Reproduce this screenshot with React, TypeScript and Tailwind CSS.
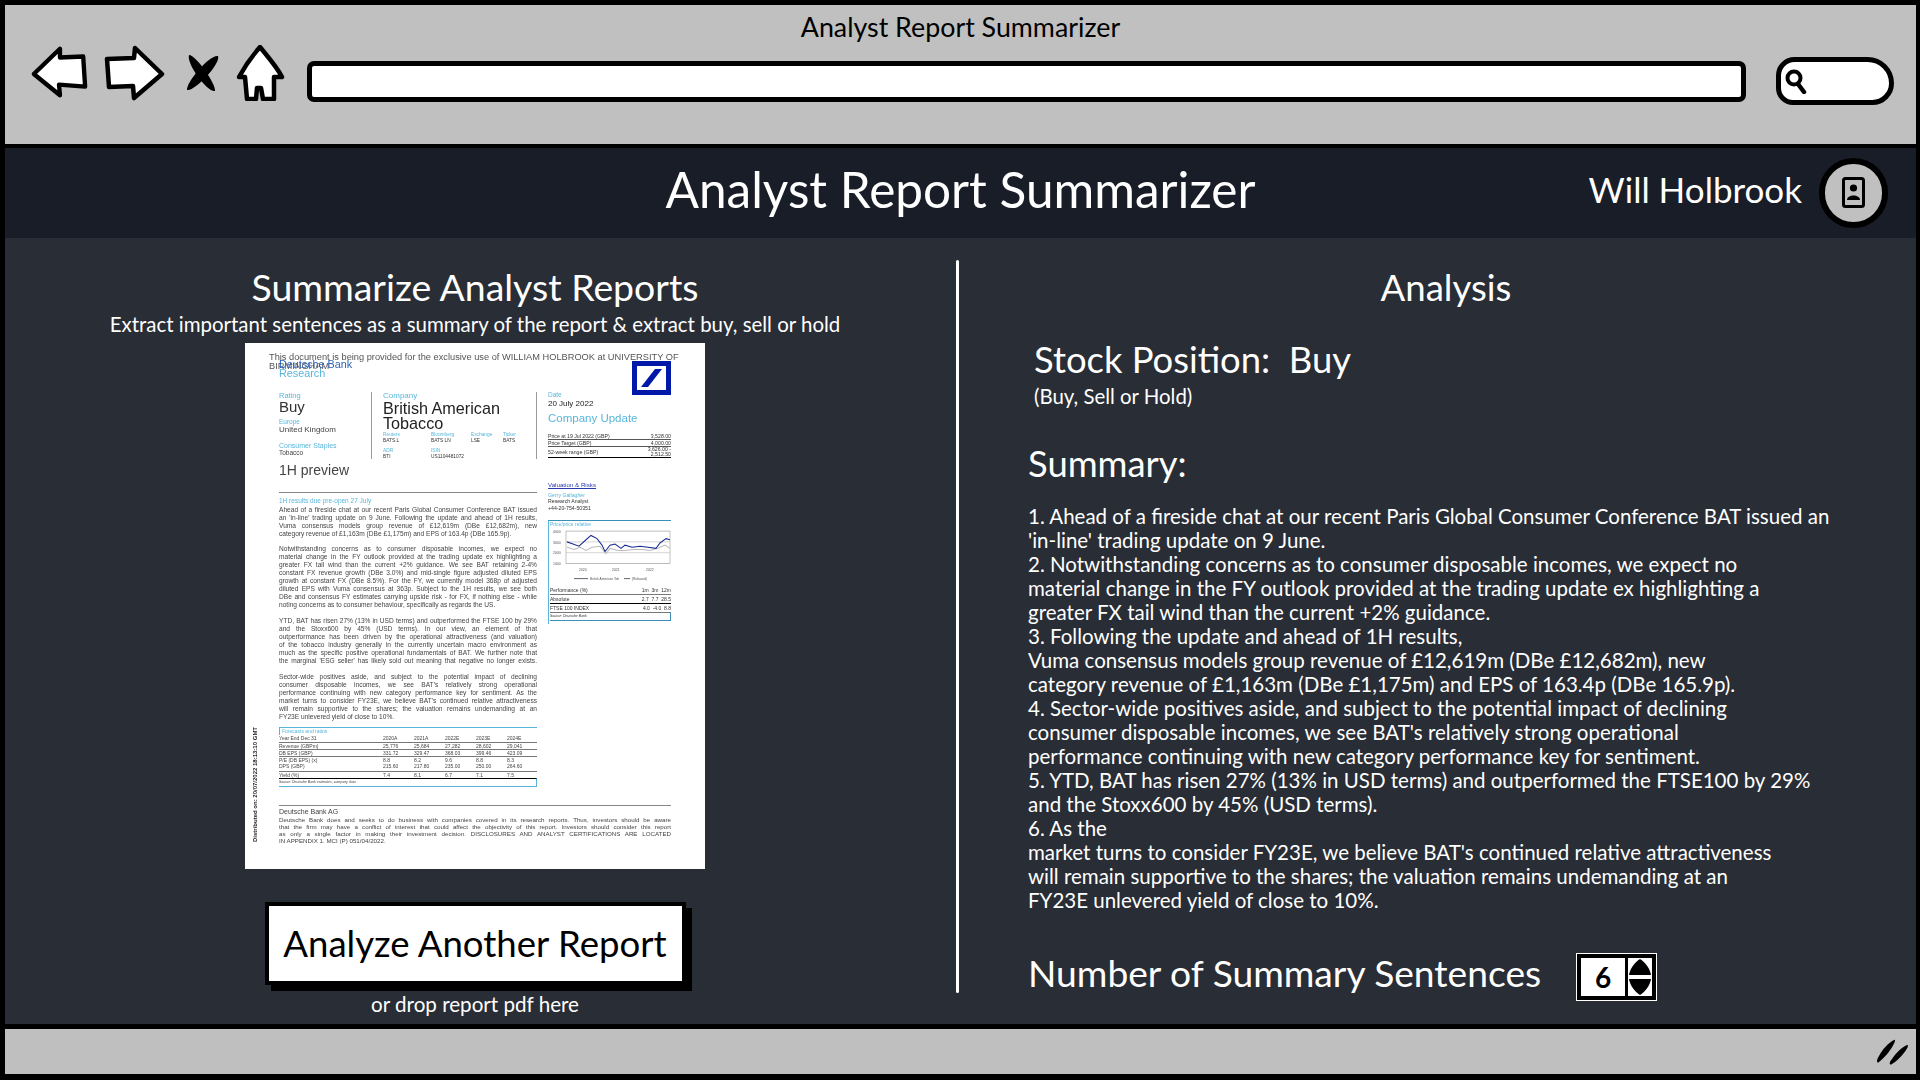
import React from "react";

const ui = "font-['Lato','Open_Sans',sans-serif]";
const doc = "font-['Liberation_Sans',Arial,sans-serif]";

const summary = [
  "1. Ahead of a fireside chat at our recent Paris Global Consumer Conference BAT issued an",
  "'in-line' trading update on 9 June.",
  "2. Notwithstanding concerns as to consumer disposable incomes, we expect no",
  "material change in the FY outlook provided at the trading update ex highlighting a",
  "greater FX tail wind than the current +2% guidance.",
  "3. Following the update and ahead of 1H results,",
  "Vuma consensus models group revenue of £12,619m (DBe £12,682m), new",
  "category revenue of £1,163m (DBe £1,175m) and EPS of 163.4p (DBe 165.9p).",
  "4. Sector-wide positives aside, and subject to the potential impact of declining",
  "consumer disposable incomes, we see BAT's relatively strong operational",
  "performance continuing with new category performance key for sentiment.",
  "5. YTD, BAT has risen 27% (13% in USD terms) and outperformed the FTSE100 by 29%",
  "and the Stoxx600 by 45% (USD terms).",
  "6. As the",
  "market turns to consider FY23E, we believe BAT's continued relative attractiveness",
  "will remain supportive to the shares; the valuation remains undemanding at an",
  "FY23E unlevered yield of close to 10%.",
];

const p1 = [
  "Ahead of a fireside chat at our recent Paris Global Consumer Conference BAT issued",
  "an 'in-line' trading update on 9 June. Following the update and ahead of 1H results,",
  "Vuma consensus models group revenue of £12,619m (DBe £12,682m), new",
];
const p1Last = "category revenue of £1,163m (DBe £1,175m) and EPS of 163.4p (DBe 165.9p).";
const p2 = [
  "Notwithstanding concerns as to consumer disposable incomes, we expect no",
  "material change in the FY outlook provided at the trading update ex highlighting a",
  "greater FX tail wind than the current +2% guidance. We see BAT retaining 2-4%",
  "constant FX revenue growth (DBe 3.0%) and mid-single figure adjusted diluted EPS",
  "growth at constant FX (DBe 8.5%). For the FY, we currently model 368p of adjusted",
  "diluted EPS with Vuma consensus at 363p. Subject to the 1H results, we see both",
  "DBe and consensus FY estimates carrying upside risk - for FX, if nothing else - while",
];
const p2Last = "noting concerns as to consumer behaviour, specifically as regards the US.";
const p3 = [
  "YTD, BAT has risen 27% (13% in USD terms) and outperformed the FTSE 100 by 29%",
  "and the Stoxx600 by 45% (USD terms). In our view, an element of that",
  "outperformance has been driven by the operational attractiveness (and valuation)",
  "of the tobacco industry generally in the currently uncertain macro environment as",
  "much as the specific positive operational fundamentals of BAT. We further note that",
  "the marginal 'ESG seller' has likely sold out meaning that negative no longer exists.",
];
const p4 = [
  "Sector-wide positives aside, and subject to the potential impact of declining",
  "consumer disposable incomes, we see BAT's relatively strong operational",
  "performance continuing with new category performance key for sentiment. As the",
  "market turns to consider FY23E, we believe BAT's continued relative attractiveness",
  "will remain supportive to the shares; the valuation remains undemanding at an",
];

function Para({ lines, last, className = "" }: { lines: string[]; last?: string; className?: string }) {
  return (
    <div className={"text-[6.6px] leading-[8px] text-[#444] " + className}>
      {lines.map((l, i) => (
        <div key={i} className="whitespace-nowrap [text-align-last:justify]">
          {l}
        </div>
      ))}
      {last ? <div className="whitespace-nowrap">{last}</div> : null}
    </div>
  );
}

const forecast = [
  ["Year End Dec 31", "2020A", "2021A", "2022E", "2023E", "2024E"],
  ["Revenue (GBPm)", "25,776", "25,684", "27,282", "28,602", "29,041"],
  ["DB EPS (GBP)", "331.72", "329.47", "368.03", "399.46", "423.09"],
  ["P/E (DB EPS) (x)", "8.8", "8.2", "9.6", "8.8", "8.3"],
  ["DPS (GBP)", "215.60", "217.80", "235.00", "250.00", "264.60"],
  ["Yield (%)", "7.4", "8.1", "6.7", "7.1", "7.5"],
];

function Label({ children, className = "" }: { children: React.ReactNode; className?: string }) {
  return <div className={"text-[#58b6dc] leading-none " + className}>{children}</div>;
}

function DocPage() {
  return (
    <div className={"relative w-[460px] h-[526px] bg-white overflow-hidden blur-[0.4px] text-[#333] pl-[34px] pr-[34px] pt-[10px] shrink-0 " + doc}>
      <div className="-ml-[10px] w-[440px] text-[9.25px] leading-[9px] text-[#555] whitespace-nowrap">
        This document is being provided for the exclusive use of WILLIAM HOLBROOK at UNIVERSITY OF
        <br />
        BIRMINGHAM
      </div>
      <svg className="absolute left-[387px] top-[18px]" width="39" height="34" viewBox="0 0 39 34">
        <rect width="39" height="34" fill="#0018a8" />
        <rect x="5" y="5" width="29" height="24" fill="#fff" />
        <path d="M9 26 L23 8 L30 8 L16 26 Z" fill="#0018a8" />
      </svg>
      <div className="-mt-[11px] text-[10.8px] leading-[8px] text-[#2a62b8]">Deutsche Bank</div>
      <div className="text-[10.8px] leading-[10px] text-[#58b6dc]">Research</div>

      <div className="flex mt-[14px] h-[67px]">
        <div className="w-[93px] border-r border-[#999] shrink-0">
          <Label className="text-[7.5px]">Rating</Label>
          <div className="text-[15px] leading-[15px] -mt-[1px]">Buy</div>
          <Label className="text-[6.5px] mt-[5px]">Europe</Label>
          <div className="text-[8px] leading-[8px] mt-[1px] text-[#444]">United Kingdom</div>
          <Label className="text-[7px] mt-[8px]">Consumer Staples</Label>
          <div className="text-[6.5px] leading-[8px] text-[#444]">Tobacco</div>
        </div>
        <div className="w-[165px] border-r border-[#999] pl-[11px] shrink-0">
          <Label className="text-[8px]">Company</Label>
          <div className="text-[16.2px] leading-[15px] mt-[1px] text-[#222] whitespace-nowrap">British American</div>
          <div className="text-[16.2px] leading-[15px] text-[#222]">Tobacco</div>
          <div className="grid grid-cols-[48px_40px_32px_20px] text-[4.8px] leading-[6px] mt-[2px]">
            <Label>Reuters</Label>
            <Label>Bloomberg</Label>
            <Label>Exchange</Label>
            <Label>Ticker</Label>
            <div>BATS.L</div>
            <div>BATS LN</div>
            <div>LSE</div>
            <div>BATS</div>
          </div>
          <div className="grid grid-cols-[48px_80px] text-[4.8px] leading-[6px] mt-[5px]">
            <Label>ADR</Label>
            <Label>ISIN</Label>
            <div>BTI</div>
            <div>US1104481072</div>
          </div>
        </div>
        <div className="pl-[11px] w-[134px] shrink-0">
          <Label className="text-[6.5px]">Date</Label>
          <div className="text-[8px] leading-[8px] mt-[1px] text-[#222]">20 July 2022</div>
          <Label className="text-[11.5px] mt-[5px] whitespace-nowrap">Company Update</Label>
          <div className="text-[5.2px] leading-[6px] mt-[9px]">
            <div className="flex justify-between border-b border-[#555]"><span>Price at 19 Jul 2022 (GBP)</span><span>3,528.00</span></div>
            <div className="flex justify-between border-b border-[#555]"><span>Price Target (GBP)</span><span>4,000.00</span></div>
            <div className="flex justify-between items-center border-b border-black leading-[5px]"><span>52-week range (GBP)</span><span className="text-right">3,626.00 -<br />2,512.50</span></div>
          </div>
        </div>
      </div>

      <div className="flex">
        <div className="w-[258px] shrink-0">
          <div className="text-[14px] leading-[14px] text-[#444] mt-[4px]">1H preview</div>
          <div className="h-[1px] bg-[#888] mt-[15px]" />
          <Label className="text-[6.5px] leading-[8px] mt-[5px]">1H results due pre-open 27 July</Label>
          <Para lines={p1} last={p1Last} className="mt-[1px]" />
          <Para lines={p2} last={p2Last} className="mt-[7px]" />
          <Para lines={p3} className="mt-[8px]" />
          <Para lines={p4} last="FY23E unlevered yield of close to 10%." className="mt-[8px]" />
          <div className="mt-[6px] border-t border-[#58b6dc] h-[58px] text-[5px] leading-[7.2px] text-[#444]">
            <div className="text-[#58b6dc] border-l border-[#58b6dc] pl-[2px] h-[7px]">Forecasts and ratios</div>
            {forecast.map((r, i) => (
              <div key={i} className={"grid grid-cols-[104px_31px_31px_31px_31px_30px] " + (i === 0 || i === 4 ? "" : "border-t border-[#777] leading-[6.2px]")}>
                {r.map((c, j) => <div key={j}>{c}</div>)}
              </div>
            ))}
            <div className="border-t border-black border-b border-b-[#58b6dc] border-r border-r-[#58b6dc] text-[3.5px] leading-[7px] italic">Source: Deutsche Bank estimates, company data</div>
          </div>
        </div>
        <div className="pl-[11px] w-[134px] shrink-0">
          <div className="text-[6.2px] leading-[7px] text-[#2a3ab0] underline mt-[22px]">Valuation &amp; Risks</div>
          <Label className="text-[5.2px] leading-[8px] mt-[5px]">Gerry Gallagher</Label>
          <div className="text-[5.2px] leading-[7px]">Research Analyst</div>
          <div className="text-[5.2px] leading-[7px]">+44-20-754-50351</div>
          <div className="mt-[8px] border-t border-[#3a8fb8] border-l border-l-[#58b6dc] h-[104px] text-[5px] leading-[7px] whitespace-nowrap pl-[1px]">
            <Label className="text-[5px] leading-[7px] mt-[1px]">Price/price relative</Label>
            <svg className="mt-[3px]" width="122" height="54" viewBox="0 0 122 50" preserveAspectRatio="none">
              <g fill="#555" fontSize="3.5">
                <text x="3" y="3">4000</text><text x="3" y="13">3000</text><text x="3" y="22">2000</text><text x="3" y="32">1000</text>
                <text x="29" y="38">2020</text><text x="62" y="38">2021</text><text x="96" y="38">2022</text>
              </g>
              <rect x="16" y="1" width="104" height="30" fill="none" stroke="#999" strokeWidth="0.6" />
              <path d="M16 11H120M16 21H120" stroke="#bbb" strokeWidth="0.6" />
              <path d="M17 16 L24 18 L30 16 L36 19 L42 16 L50 15 L56 22 L60 17 L68 19 L74 19 L84 18 L92 18 L100 19 L108 17 L115 14 L120 17" fill="none" stroke="#bbb" strokeWidth="1" />
              <path d="M17 11 L23 13 L29 15 L36 9 L41 5 L47 8 L52 14 L55 20 L60 14 L65 13 L71 17 L75 14 L82 16 L90 15 L98 16 L106 17 L110 12 L116 8 L120 9" fill="none" stroke="#1a2a90" strokeWidth="1" />
              <path d="M24 45H38M74 45H80" stroke="#445" strokeWidth="0.8" />
              <text x="40" y="46" fontSize="3.2" fill="#555">British American Tob</text>
              <text x="82" y="46" fontSize="3.2" fill="#555">(Rebased)</text>
            </svg>
            <div className="flex justify-between leading-[7px] mt-[3px]"><span>Performance (%)</span><span>1m&nbsp;&nbsp;3m&nbsp;&nbsp;12m</span></div>
            <div className="flex justify-between border-t border-[#777] leading-[8px]"><span>Absolute</span><span>2.7&nbsp;&nbsp;7.7&nbsp;&nbsp;28.5</span></div>
            <div className="flex justify-between border-t border-black leading-[8px]"><span>FTSE 100 INDEX</span><span>4.0&nbsp;&nbsp;-4.0&nbsp;&nbsp;8.8</span></div>
            <div className="border-t border-[#777] border-b border-b-[#3a8fb8] border-r border-r-[#3a8fb8] text-[3.5px] leading-[7px] italic">Source: Deutsche Bank</div>
          </div>
        </div>
      </div>

      <div className="h-[1px] bg-[#888] mt-[20px]" />
      <div className="text-[7px] leading-[9px] mt-[1px] text-[#444]">Deutsche Bank AG</div>
      <div className="text-[6.2px] leading-[7.2px] text-[#444] whitespace-nowrap">
        <div className="[text-align-last:justify]">Deutsche Bank does and seeks to do business with companies covered in its research reports. Thus, investors should be aware</div>
        <div className="[text-align-last:justify]">that the firm may have a conflict of interest that could affect the objectivity of this report. Investors should consider this report</div>
        <div className="[text-align-last:justify]">as only a single factor in making their investment decision. DISCLOSURES AND ANALYST CERTIFICATIONS ARE LOCATED</div>
        <div>IN APPENDIX 1. MCI (P) 051/04/2022.</div>
      </div>

      <div className="absolute left-[7px] top-[499px] text-[6px] leading-[7px] text-[#222] font-bold whitespace-nowrap origin-top-left -rotate-90">
        Distributed on: 20/07/2022 18:13:10 GMT
      </div>
    </div>
  );
}

function Chrome() {
  return (
    <div className="h-[139px] bg-[#c0c0c0] shrink-0 flex flex-col">
      <div className={"h-[44px] text-center text-[26.8px] leading-[44px] text-black " + ui}>Analyst Report Summarizer</div>
      <div className="flex items-center h-[60px] -mt-[6px]">
        <svg className="shrink-0 ml-[24px]" width="60" height="56" viewBox="28 46 62 56">
          <path d="M33 75 L60 49 L60 58 L84 57 L86 88 L59 86 L60 97 Z" fill="#fff" stroke="#000" strokeWidth="4.5" strokeLinejoin="round" />
        </svg>
        <svg className="shrink-0 ml-[15px]" width="62" height="56" viewBox="104 46 62 56">
          <path d="M107 60 L134 59 L135 49 L162 75 L134 99 L133 87 L109 88 Z" fill="#fff" stroke="#000" strokeWidth="4.5" strokeLinejoin="round" />
        </svg>
        <svg className="shrink-0 ml-[19px]" width="36" height="40" viewBox="186 51 36 40">
          <path d="M190 53 C197 53 217 82 216 89 C209 91 187 62 190 53 Z" fill="#000" />
          <path d="M219 54 C222 62 195 90 188 88 C187 80 211 52 219 54 Z" fill="#000" />
        </svg>
        <svg className="shrink-0 ml-[15px]" width="50" height="56" viewBox="236 45 50 56">
          <path d="M260 47 C268 57 277 67 282 77 L274 77 L274 99 L263 99 L261 88 L257 88 L256 99 L247 99 L245 77 L239 77 C245 66 252 56 260 47 Z" fill="#fff" stroke="#000" strokeWidth="4.5" strokeLinejoin="round" />
        </svg>
        <div className="ml-[21px] mt-[16px] w-[1439px] h-[41px] bg-white border-[5px] border-black rounded-[7px] shrink-0" />
        <div className="ml-[30px] mt-[16px] w-[118px] h-[48px] bg-white border-[5px] border-black rounded-[24px_34px_28px_22px] shrink-0 flex items-center pl-[4px]">
          <svg width="22" height="26" viewBox="0 0 22 26">
            <circle cx="9" cy="10" r="6.5" fill="none" stroke="#000" strokeWidth="4" />
            <path d="M13 16 L19 24" stroke="#000" strokeWidth="4.5" strokeLinecap="round" />
          </svg>
        </div>
      </div>
    </div>
  );
}

function Header() {
  return (
    <div className={"relative h-[90px] bg-[#191d28] flex items-center justify-center shrink-0 text-white " + ui}>
      <div className="text-[49.5px] leading-none mb-[7px]">Analyst Report Summarizer</div>
      <div className="absolute right-[28px] top-[10px] flex items-center gap-[17px]">
        <span className="text-[35px] leading-none mb-[7px]">Will Holbrook</span>
        <div className="w-[69px] h-[70px] rounded-full bg-[#c0c0c0] border-[6px] border-black flex items-center justify-center">
          <svg width="24" height="32" viewBox="0 0 24 32">
            <rect x="1.5" y="1.5" width="20" height="28" rx="2" fill="none" stroke="#000" strokeWidth="3" />
            <circle cx="11.5" cy="11" r="3.6" fill="#000" />
            <path d="M5 23 C5 17 18 17 18 23 Z" fill="#000" />
          </svg>
        </div>
      </div>
    </div>
  );
}

function Left() {
  return (
    <div className={"w-[940px] flex flex-col items-center text-white shrink-0 " + ui}>
      <div className="text-[37.4px] leading-[37px] mt-[30px]">Summarize Analyst Reports</div>
      <div className="text-[20.45px] leading-[20px] mt-[9px]">Extract important sentences as a summary of the report &amp; extract buy, sell or hold</div>
      <div className="mt-[9px]"><DocPage /></div>
      <div className="mt-[33px] w-[421px] h-[83px] bg-white border-[4px] border-black shadow-[6px_6px_0_#000] flex items-center justify-center text-black text-[36.6px] leading-none">
        Analyze Another Report
      </div>
      <div className="text-[20.6px] leading-[20px] mt-[9px]">or drop report pdf here</div>
    </div>
  );
}

function Right() {
  return (
    <div className={"flex-1 pl-[69px] text-white " + ui}>
      <div className="w-[836px] text-center text-[36.6px] leading-[36px] mt-[31px]">Analysis</div>
      <div className="ml-[6px] text-[36.4px] leading-[36px] mt-[36px] whitespace-pre">Stock Position:  Buy</div>
      <div className="ml-[6px] text-[20.4px] leading-[20px] mt-[9px]">(Buy, Sell or Hold)</div>
      <div className="text-[36.4px] leading-[36px] mt-[39px]">Summary:</div>
      <div className="text-[20.5px] leading-[24px] mt-[23px] whitespace-nowrap">
        {summary.map((s, i) => <div key={i}>{s}</div>)}
      </div>
      <div className="flex items-center mt-[37px]">
        <span className="text-[37.2px] leading-none">Number of Summary Sentences</span>
        <div className="ml-[35px] w-[81px] h-[48px] translate-y-[4px] bg-black border border-white p-[4px] flex gap-[3px]">
          <div className="w-[45px] bg-white flex items-center justify-center text-black text-[28px] font-bold leading-none">6</div>
          <div className="flex-1 bg-white flex items-center justify-center">
            <svg width="24" height="38" viewBox="0 0 24 38">
              <path d="M12 1 C18 5 22 11 23 17 L1 17 C2 11 6 5 12 1 Z" fill="#000" />
              <path d="M1 21 L23 21 C22 27 18 33 12 37 C6 33 2 27 1 21 Z" fill="#000" />
            </svg>
          </div>
        </div>
      </div>
    </div>
  );
}

export default function App() {
  return (
    <div className="w-[1920px] h-[1080px] bg-black pt-[5px] pl-[5px] pr-[4px] pb-[6px] overflow-hidden flex flex-col">
      <Chrome />
      <div className="h-[4px] bg-black shrink-0" />
      <Header />
      <div className="h-[786px] bg-[#292d36] flex shrink-0">
        <Left />
        <div className="w-[3px] h-[733px] mt-[22px] ml-[11px] bg-white rounded-full shrink-0" />
        <Right />
      </div>
      <div className="h-[5px] bg-black shrink-0" />
      <div className="flex-1 bg-[#bfbfbf] flex items-center justify-end pr-[6px]">
        <svg width="34" height="28" viewBox="0 0 34 28">
          <path d="M18 2 C22 0 14 16 3 24 C1 26 0 22 3 18 C6 12 12 5 18 2 Z" fill="#000" />
          <path d="M31 7 C35 6 26 20 16 26 C13 28 13 24 16 21 C20 15 26 9 31 7 Z" fill="#000" />
        </svg>
      </div>
    </div>
  );
}
